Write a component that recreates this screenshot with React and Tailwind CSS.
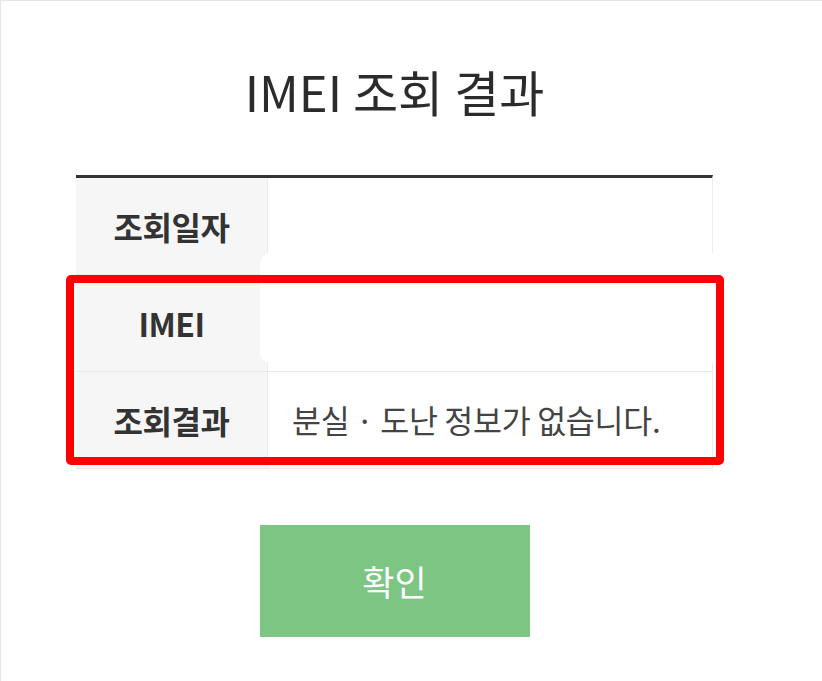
import React from "react";

const rows = [
  { label: "조회일자", value: "" },
  { label: "IMEI", value: "" },
  { label: "조회결과", value: "분실 · 도난 정보가 없습니다." },
];

export default function App() {
  return (
    <div
      className="relative w-[822px] h-[681px] bg-white border-l border-t border-[#e6e6e6] overflow-hidden"
      style={{ fontFamily: '"Noto Sans CJK KR", "Noto Sans", sans-serif' }}
    >
      <div className="ml-[75px] w-[637px] flex flex-col items-center">
        {/* Title */}
        <h1 className="mt-[60px] text-[49px] leading-[60px] text-[#2b2b2b] font-normal">
          IMEI 조회 결과
        </h1>

        {/* Result table */}
        <div className="mt-[54px] w-full border-t-[3px] border-[#333] border-r border-r-[#ececec]">
          {rows.map((row) => (
            <div key={row.label} className="flex h-[97px] border-b border-[#e9e9e9]">
              <div className="w-[192px] shrink-0 bg-[#f6f6f6] border-r border-[#ececec] flex items-center justify-center text-[32px] font-bold text-[#333] tracking-[-0.5px]">
                {row.label}
              </div>
              <div className="flex-1 flex items-center pl-[24px] text-[31.5px] text-[#444] tracking-[-0.3px]">
                {row.value}
              </div>
            </div>
          ))}
        </div>

        {/* Confirm button */}
        <button className="mt-[56px] w-[270px] h-[112px] bg-[#7dc583] text-white text-[35px]">
          확인
        </button>
      </div>

      {/* redaction patch */}
      <div className="absolute left-[259px] top-[252px] w-[453px] h-[110px] bg-white rounded-l-[10px]" />

      {/* annotation box */}
      <div className="absolute left-[65px] top-[274px] w-[658px] h-[190px] border-[8px] border-[#ff0000] rounded-[5px]" />
    </div>
  );
}
